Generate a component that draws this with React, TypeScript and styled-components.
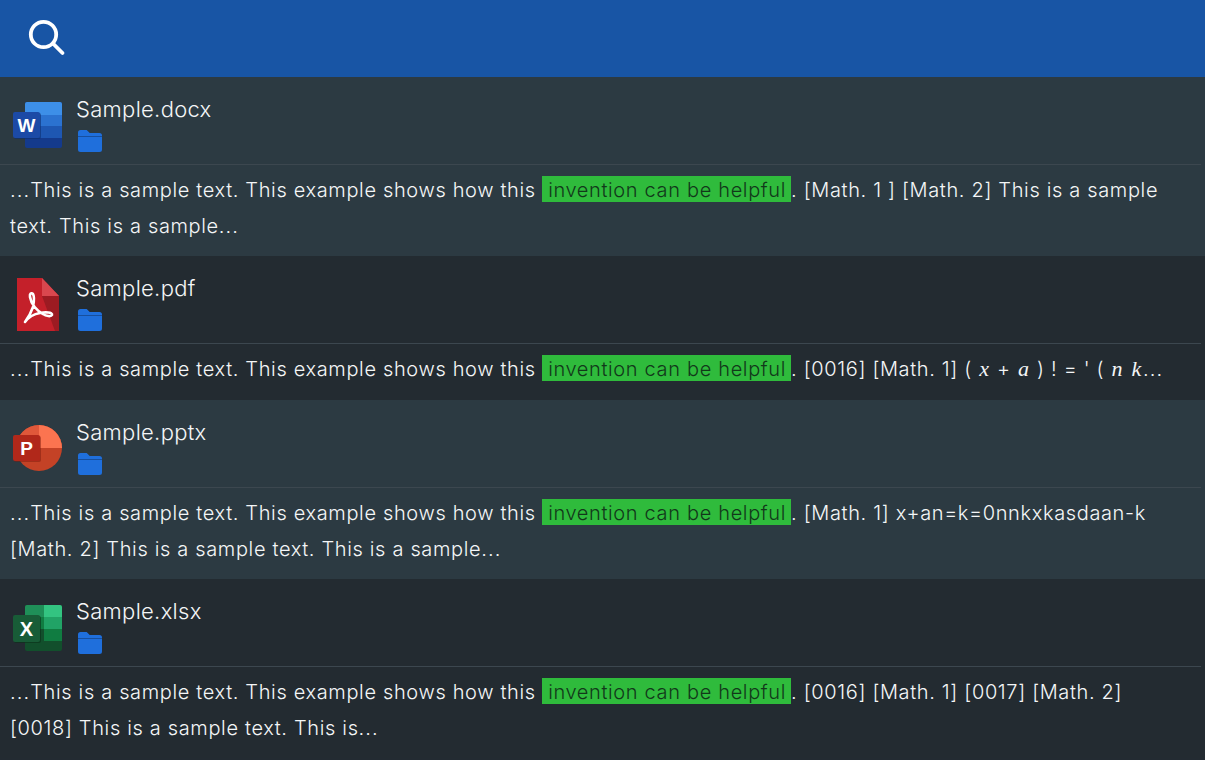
import React from "react";
import styled, { createGlobalStyle } from "styled-components";

const GlobalStyle = createGlobalStyle`
  html, body { margin: 0; padding: 0; background: #232b32; }
  body { font-family: Inter, "Noto Sans", "Liberation Sans", sans-serif; overflow: hidden; }
`;

const Page = styled.div`
  width: 1205px;
  height: 760px;
  overflow: hidden;
  color: #f4f6f7;
`;

const SearchBar = styled.header`
  height: 77px;
  box-sizing: border-box;
  padding: 0 0 3px 28px;
  display: flex;
  align-items: center;
  background: #1855a5;
  box-shadow: 0 1px 0 #1d2a38;
`;

const Result = styled.section<{ $light: boolean }>`
  min-height: 144px;
  background: ${(p) => (p.$light ? "#2c3a42" : "#232b31")};
`;

const ResultHead = styled.div`
  height: 88px;
  box-sizing: border-box;
  margin-right: 4px;
  padding-left: 13px;
  display: flex;
  border-bottom: 1px solid #3c474f;
`;

const FileIcon = styled.div`
  width: 63px;
  height: 87px;
  padding-top: 9px;
  box-sizing: border-box;
  display: flex;
  align-items: center;
`;

const FileInfo = styled.div`
  padding-top: 18px;
  display: flex;
  flex-direction: column;
  align-items: flex-start;
  gap: 6px;
`;

const FileName = styled.div`
  font-size: 22px;
  font-weight: 350;
  line-height: 28px;
  letter-spacing: 0.3px;
`;

const Snippet = styled.p`
  margin: 0;
  padding: 7px 20px 12px 10px;
  font-size: 20px;
  font-weight: 350;
  line-height: 36px;
  letter-spacing: 0.63px;
  word-spacing: 0.1px;
`;

const Dots = styled.span`
  letter-spacing: 1.1px;
`;

const Hit = styled.mark`
  background: #2fbb3c;
  color: #12381a;
  padding: 2px 5px 0 6px;
`;

const M = styled.i`
  font-family: "Liberation Serif", serif;
  font-size: 22px;
  margin: 0 1px;
`;

function WordIcon() {
  return (
    <svg width="52" height="48" viewBox="0 0 52 48">
      <rect x="12" y="1" width="37" height="46" rx="2" fill="#143a8c" />
      <path d="M12 3a2 2 0 0 1 2-2h33a2 2 0 0 1 2 2v11H12z" fill="#3d8fe8" />
      <rect x="12" y="14" width="37" height="11" fill="#2b72d0" />
      <rect x="12" y="25" width="37" height="12" fill="#1e57b2" />
      <rect x="1" y="12" width="27" height="26" rx="2" fill="#0e2f70" opacity="0.6" />
      <rect x="0" y="11" width="27" height="26" rx="2" fill="#1c4aa6" />
      <text x="13.5" y="31" textAnchor="middle" fontFamily="Liberation Sans" fontWeight="700" fontSize="19" fill="#fff">W</text>
    </svg>
  );
}

function PdfIcon() {
  return (
    <svg width="52" height="58" viewBox="0 0 52 58">
      <path d="M4 3h25l17 18v35H4z" fill="#c4202a" />
      <path d="M29 3l17 18H29z" fill="#d9474e" />
      <path d="M29 21h17v35h-4z" fill="#9c1b22" />
      <path
        d="M12 47C15 43 18 38 20 32C21 27 22 22 20 19C18 17 16.5 19 17 22C18 29 24 36 30 39C33 41 38 42 39 40C40 37 32 37 27 38C21 39 15 43 12 47Z"
        fill="none"
        stroke="#fff"
        strokeWidth="2.6"
        strokeLinejoin="round"
      />
    </svg>
  );
}

function PptIcon() {
  return (
    <svg width="52" height="48" viewBox="0 0 52 48">
      <circle cx="26" cy="24" r="23" fill="#c44226" />
      <path d="M26 1a23 23 0 0 1 23 23H26z" fill="#fb7450" />
      <path d="M3 24A23 23 0 0 1 26 1v23z" fill="#e0583a" />
      <rect x="1" y="12" width="27" height="26" rx="2" fill="#7e1c0e" opacity="0.5" />
      <rect x="0" y="11" width="27" height="26" rx="2" fill="#b1281a" />
      <text x="13.5" y="31" textAnchor="middle" fontFamily="Liberation Sans" fontWeight="700" fontSize="19" fill="#fff">P</text>
    </svg>
  );
}

function ExcelIcon() {
  return (
    <svg width="52" height="50" viewBox="0 0 52 50">
      <rect x="12" y="3" width="37" height="46" rx="2" fill="#124f2c" />
      <path d="M12 5a2 2 0 0 1 2-2h17v12H12z" fill="#1f8f58" />
      <path d="M31 3h16a2 2 0 0 1 2 2v10H31z" fill="#33c481" />
      <rect x="12" y="15" width="19" height="12" fill="#107c41" />
      <rect x="31" y="15" width="18" height="12" fill="#21a366" />
      <rect x="31" y="27" width="18" height="12" fill="#107c41" />
      <rect x="1" y="14" width="27" height="27" rx="2" fill="#0a3019" opacity="0.6" />
      <rect x="0" y="13" width="27" height="27" rx="2" fill="#185c37" />
      <text x="13.5" y="33.5" textAnchor="middle" fontFamily="Liberation Sans" fontWeight="700" fontSize="20" fill="#fff">X</text>
    </svg>
  );
}

function FolderIcon() {
  return (
    <svg width="28" height="24" viewBox="0 0 28 24">
      <path d="M2 3.5a2.5 2.5 0 0 1 2.5-2.5h6.2l3 3h9.8a2.5 2.5 0 0 1 2.5 2.5v14a2.5 2.5 0 0 1-2.5 2.5h-19a2.5 2.5 0 0 1-2.5-2.5z" fill="#1f6fdc" />
      <path d="M2 7.5h24" stroke="#174f9e" strokeWidth="1" />
    </svg>
  );
}

function SearchIcon() {
  return (
    <svg width="38" height="38" viewBox="0 0 38 38" fill="none" stroke="#fff" strokeWidth="3.8" strokeLinecap="round">
      <circle cx="15.5" cy="16.5" r="12.7" />
      <path d="M25.5 26l9 9" />
    </svg>
  );
}

type Kind = "docx" | "pdf" | "pptx" | "xlsx";

const icons: Record<Kind, React.ReactNode> = {
  docx: <WordIcon />,
  pdf: <PdfIcon />,
  pptx: <PptIcon />,
  xlsx: <ExcelIcon />,
};

const results: { kind: Kind; light: boolean; after: React.ReactNode }[] = [
  {
    kind: "docx",
    light: true,
    after: ". [Math. 1 ] [Math. 2] This is a sample text. This is a sample",
  },
  {
    kind: "pdf",
    light: false,
    after: (
      <>
        . [0016] [Math. 1] ( <M>x</M> + <M>a</M> ) ! = ' ( <M>n</M> <M>k</M>
      </>
    ),
  },
  {
    kind: "pptx",
    light: true,
    after: ". [Math. 1] x+an=k=0nnkxkasdaan-k [Math. 2] This is a sample text. This is a sample",
  },
  {
    kind: "xlsx",
    light: false,
    after: ". [0016] [Math. 1] [0017] [Math. 2] [0018] This is a sample text. This is",
  },
];

export default function App() {
  return (
    <Page>
      <GlobalStyle />
      <SearchBar>
        <SearchIcon />
      </SearchBar>
      {results.map((r) => (
        <Result key={r.kind} $light={r.light}>
          <ResultHead>
            <FileIcon>{icons[r.kind]}</FileIcon>
            <FileInfo>
              <FileName>Sample.{r.kind}</FileName>
              <FolderIcon />
            </FileInfo>
          </ResultHead>
          <Snippet>
            <Dots>...</Dots>This is a sample text. This example shows how this <Hit>invention can be helpful</Hit>
            {r.after}
            <Dots>...</Dots>
          </Snippet>
        </Result>
      ))}
    </Page>
  );
}
